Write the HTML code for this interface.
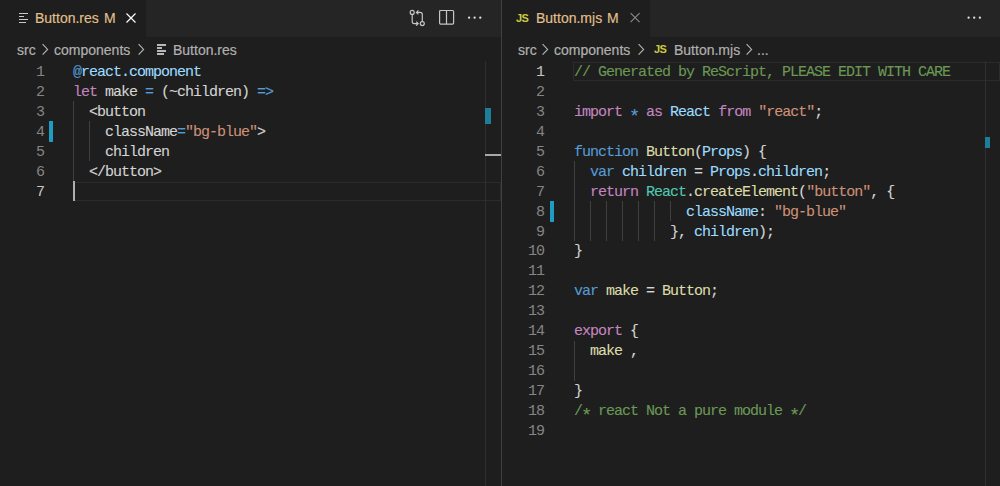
<!DOCTYPE html>
<html><head><meta charset="utf-8">
<style>
*{margin:0;padding:0;box-sizing:border-box}
html,body{width:1000px;height:486px;overflow:hidden;background:#1e1e1e}
body{position:relative;font-family:"Liberation Sans",sans-serif}
.abs{position:absolute}
.tabbar{position:absolute;top:0;height:37px;background:#252526}
.tab{position:absolute;top:0;height:37px;background:#1e1e1e}
.ttl{position:absolute;top:10px;font-size:14px;line-height:17px;color:#e2c08d;white-space:pre;-webkit-text-stroke:0.15px currentColor}
.bc{position:absolute;top:42px;font-size:14px;line-height:17px;color:#b0b0b0;white-space:pre;-webkit-text-stroke:0.2px currentColor}
.code{position:absolute;font-family:"Liberation Mono",monospace;font-size:15px;letter-spacing:-1px;line-height:19.94px;color:#d4d4d4;white-space:pre;-webkit-text-stroke:0.1px currentColor}
.ln{position:absolute;font-family:"Liberation Mono",monospace;font-size:15px;letter-spacing:-1px;line-height:19.94px;color:#858585;text-align:right;white-space:pre}
.k{color:#c586c0}.b{color:#569cd6}.s{color:#ce9178}.f{color:#dcdcaa}.v{color:#9cdcfe}.t{color:#4ec9b0}.c{color:#6a9955}
.ast{display:inline-block;transform:translateY(5px) scale(1.25)}
.guide{position:absolute;width:1px;background:#404040}
</style></head><body>
<!-- LEFT GROUP -->
<div class="tabbar" style="left:0;width:501px"></div>
<div class="tab" style="left:0;width:146px"></div>
<!-- file icon -->
<div class="abs" style="left:19px;top:13px;width:9px;height:1.2px;background:#c8c8c8"></div>
<div class="abs" style="left:19px;top:16px;width:5px;height:1.2px;background:#c8c8c8"></div>
<div class="abs" style="left:19px;top:19px;width:9px;height:1.2px;background:#c8c8c8"></div>
<div class="abs" style="left:19px;top:22px;width:7px;height:1.2px;background:#c8c8c8"></div>
<div class="ttl" style="left:35px">Button.res</div>
<div class="ttl" style="left:104px">M</div>
<svg class="abs" style="left:125px;top:12px" width="12" height="12" viewBox="0 0 12 12"><path d="M1.5 1.5L10.5 10.5M10.5 1.5L1.5 10.5" stroke="#ffffff" stroke-width="1.15"/></svg>
<!-- toolbar icons -->
<svg class="abs" style="left:407px;top:8px" width="20" height="22" viewBox="0 0 20 22">
<g fill="none" stroke="#c8c8c8" stroke-width="1.15">
<circle cx="5.2" cy="4.4" r="2"/><circle cx="15.3" cy="15.6" r="2"/>
<path d="M5.2 6.4V13.4Q5.2 15.6 7.4 15.6H11.2M9.2 13.6L11.2 15.6L9.2 17.6"/>
<path d="M15.3 13.6V6.6Q15.3 4.4 13.1 4.4H9.4M11.4 2.4L9.4 4.4L11.4 6.4"/>
</g></svg>
<svg class="abs" style="left:438px;top:9px" width="18" height="17" viewBox="0 0 18 17">
<g fill="none" stroke="#c5c5c5" stroke-width="1.2"><rect x="1.6" y="1.5" width="14" height="13.6" rx="1"/><path d="M8.5 1.5V15.1"/></g></svg>
<svg class="abs" style="left:465px;top:14px" width="20" height="8" viewBox="0 0 20 8"><g fill="#e0e0e0"><circle cx="4.1" cy="3.7" r="1.15"/><circle cx="9.6" cy="3.7" r="1.15"/><circle cx="15.3" cy="3.7" r="1.15"/></g></svg>
<!-- breadcrumbs -->
<div class="bc" style="left:17px">src</div>
<div class="bc" style="left:54px">components</div>
<svg class="abs" style="left:41px;top:43px" width="8" height="14" viewBox="0 0 8 14"><path d="M1.6 1.2L6.6 6.4L1.6 11.6" fill="none" stroke="#b4b4b4" stroke-width="1.15"/></svg>
<svg class="abs" style="left:137px;top:43px" width="8" height="14" viewBox="0 0 8 14"><path d="M1.6 1.2L6.6 6.4L1.6 11.6" fill="none" stroke="#b4b4b4" stroke-width="1.15"/></svg>
<div class="abs" style="left:157px;top:44px;width:9px;height:1.5px;background:#b8b8b8"></div>
<div class="abs" style="left:157px;top:47px;width:5px;height:1.5px;background:#b8b8b8"></div>
<div class="abs" style="left:157px;top:50px;width:9px;height:1.5px;background:#b8b8b8"></div>
<div class="abs" style="left:157px;top:53px;width:7px;height:1.5px;background:#b8b8b8"></div>
<div class="bc" style="left:173px">Button.res</div>

<!-- current line highlight left (line 7) -->
<div class="abs" style="left:73px;top:182px;width:428px;height:19px;border:1px solid #2b2b2b"></div>
<!-- indent guides left -->
<div class="guide" style="left:73px;top:101px;height:80px"></div>
<div class="guide" style="left:89px;top:121px;height:40px"></div>
<!-- cursor -->
<div class="abs" style="left:73px;top:181px;width:2px;height:20px;background:#aeafad"></div>
<!-- gutter modified -->
<div class="abs" style="left:49px;top:121px;width:4px;height:21px;background:#1f9cc2"></div>
<!-- overview ruler -->
<div class="abs" style="left:485px;top:61px;width:1px;height:425px;background:#2f2f2f"></div>
<div class="abs" style="left:485px;top:108px;width:6px;height:16px;background:#1e7d99"></div>
<div class="abs" style="left:485px;top:154px;width:16px;height:2px;background:#a8a8a8"></div>

<div class="ln" style="left:20px;top:63px;width:24px">1
2
3
4
5
6
<span style="color:#c6c6c6">7</span></div>
<div class="code" style="left:73px;top:63px"><span class="b">@</span><span class="v">react.component</span>
<span class="k">let</span> make <span class="b">=</span> (~children) <span class="b">=&gt;</span>
  &lt;button
    className<span class="b">=</span><span class="s">"bg-blue"</span>&gt;
    children
  &lt;/button&gt;
</div>

<!-- DIVIDER -->
<div class="abs" style="left:501px;top:0;width:1px;height:486px;background:#404040"></div>

<!-- RIGHT GROUP -->
<div class="tabbar" style="left:502px;width:498px"></div>
<div class="tab" style="left:502px;width:148px"></div>
<div class="abs" style="left:516px;top:12px;font-family:'Liberation Sans',sans-serif;font-weight:bold;font-size:11px;letter-spacing:-0.5px;line-height:13px;color:#cbcb41">JS</div>
<div class="ttl" style="left:536px">Button.mjs</div>
<div class="ttl" style="left:607px">M</div>
<svg class="abs" style="left:628.5px;top:12px" width="12" height="12" viewBox="0 0 12 12"><path d="M1.6 1.2L10.6 10.2M10.6 1.2L1.6 10.2" stroke="#8a8a8a" stroke-width="1.1"/></svg>
<svg class="abs" style="left:965px;top:14px" width="20" height="8" viewBox="0 0 20 8"><g fill="#e0e0e0"><circle cx="3.6" cy="3.7" r="1.15"/><circle cx="9.2" cy="3.7" r="1.15"/><circle cx="14.9" cy="3.7" r="1.15"/></g></svg>

<div class="bc" style="left:518px">src</div>
<div class="bc" style="left:554px">components</div>
<svg class="abs" style="left:541px;top:43px" width="8" height="14" viewBox="0 0 8 14"><path d="M1.6 1.2L6.6 6.4L1.6 11.6" fill="none" stroke="#b4b4b4" stroke-width="1.15"/></svg>
<svg class="abs" style="left:637px;top:43px" width="8" height="14" viewBox="0 0 8 14"><path d="M1.6 1.2L6.6 6.4L1.6 11.6" fill="none" stroke="#b4b4b4" stroke-width="1.15"/></svg>
<div class="abs" style="left:654px;top:43px;font-weight:bold;font-size:11px;letter-spacing:-0.5px;line-height:13px;color:#cbcb41">JS</div>
<div class="bc" style="left:674px">Button.mjs</div>
<svg class="abs" style="left:745px;top:43px" width="8" height="14" viewBox="0 0 8 14"><path d="M1.6 1.2L6.6 6.4L1.6 11.6" fill="none" stroke="#b4b4b4" stroke-width="1.15"/></svg>
<div class="bc" style="left:757px">...</div>

<!-- current line highlight right (line 1) -->
<div class="abs" style="left:573px;top:62px;width:427px;height:19px;border:1px solid #2b2b2b"></div>
<!-- indent guides right -->
<div class="guide" style="left:574px;top:161px;height:80px"></div>
<div class="guide" style="left:590px;top:201px;height:40px"></div>
<div class="guide" style="left:606px;top:201px;height:40px"></div>
<div class="guide" style="left:622px;top:201px;height:40px"></div>
<div class="guide" style="left:638px;top:201px;height:40px"></div>
<div class="guide" style="left:654px;top:201px;height:40px"></div>
<div class="guide" style="left:670px;top:201px;height:20px"></div>
<div class="guide" style="left:574px;top:341px;height:40px"></div>
<!-- gutter modified -->
<div class="abs" style="left:550px;top:201px;width:4px;height:21px;background:#1f9cc2"></div>
<!-- overview ruler -->
<div class="abs" style="left:985px;top:61px;width:1px;height:425px;background:#2f2f2f"></div>
<div class="abs" style="left:985px;top:137px;width:5px;height:11px;background:#1e7d99"></div>

<div class="ln" style="left:511px;top:63px;width:33px"><span style="color:#c6c6c6">1</span>
2
3
4
5
6
7
8
9
10
11
12
13
14
15
16
17
18
19</div>
<div class="code" style="left:574px;top:63px"><span class="c">// Generated by ReScript, PLEASE EDIT WITH CARE</span>

<span class="k">import</span> <span class="b ast">*</span> <span class="k">as</span> <span class="v">React</span> <span class="k">from</span> <span class="s">"react"</span>;

<span class="b">function</span> <span class="f">Button</span>(<span class="v">Props</span>) {
  <span class="b">var</span> <span class="v">children</span> = <span class="v">Props</span>.<span class="v">children</span>;
  <span class="k">return</span> <span class="t">React</span>.<span class="f">createElement</span>(<span class="s">"button"</span>, {
              <span class="v">className</span>: <span class="s">"bg-blue"</span>
            }, <span class="v">children</span>);
}

<span class="b">var</span> <span class="f">make</span> = <span class="f">Button</span>;

<span class="k">export</span> {
  <span class="f">make</span> ,
  
}
<span class="c">/<span class="ast">*</span> react Not a pure module <span class="ast">*</span>/</span>
</div>
</body></html>
